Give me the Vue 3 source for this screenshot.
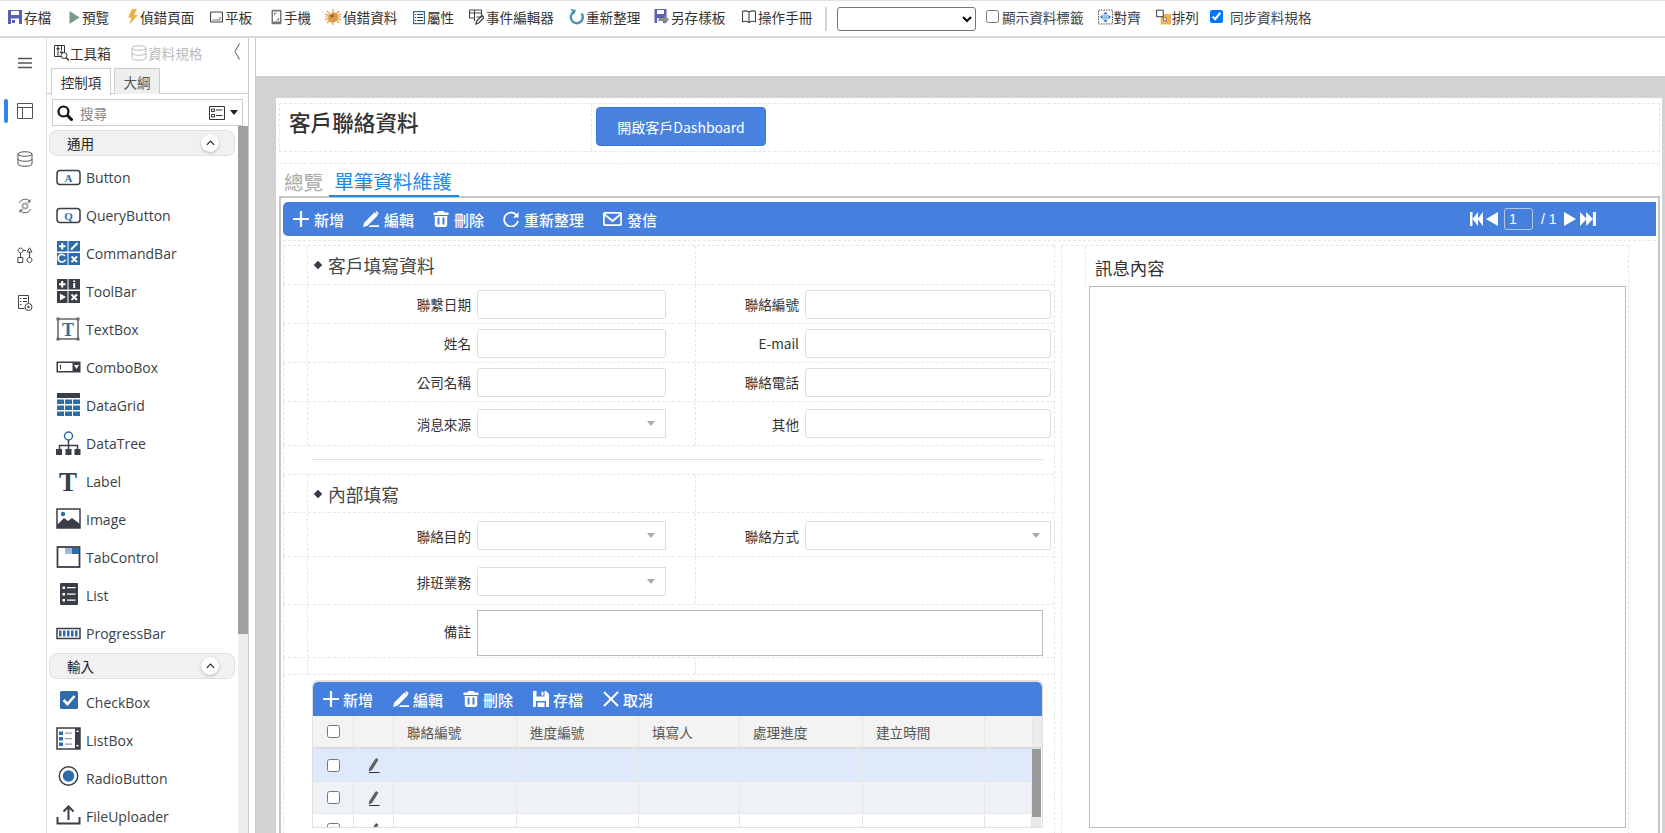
<script setup>
const toolItems = [
    { label: '存檔', icon: 'save', w: 61, iw: 14 },
    { label: '預覽', icon: 'play', w: 57, iw: 11 },
    { label: '偵錯頁面', icon: 'bolt', w: 84, iw: 12 },
    { label: '平板', icon: 'tablet', w: 61, iw: 13 },
    { label: '手機', icon: 'phone', w: 54, iw: 11 },
    { label: '偵錯資料', icon: 'bug', w: 88, iw: 16 },
    { label: '屬性', icon: 'props', w: 56, iw: 12 },
    { label: '事件編輯器', icon: 'event', w: 100, iw: 15 },
    { label: '重新整理', icon: 'refresh', w: 85, iw: 15 },
    { label: '另存樣板', icon: 'saveas', w: 88, iw: 15 },
    { label: '操作手冊', icon: 'book', w: 83, iw: 14 },
];

const icons = {
    save: '<path fill="#5a5eb5" d="M1 1h14v14H1z"/><path fill="#fff" d="M4 2h8v4H4zM4 9.500h8V15H4z"/><path fill="#5a5eb5" d="M5 11h3v3H5z"/>',
    play: '<path fill="#7d9a85" d="M3 2l10 6.500L3 15z"/>',
    bolt: '<path fill="#f0b040" d="M8 0h5l-3 6h4L5 16l2.500-7.500H4z"/>',
    tablet: '<rect x="2" y="3" width="12" height="10" rx="1" fill="none" stroke="#444" stroke-width="1.200"/><path fill="none" stroke="#777" d="M4 11h7.500V8"/>',
    phone: '<rect x="3" y=".8" width="10" height="14.400" rx="1" fill="#777"/><rect x="4.500" y="2.500" width="7" height="10" fill="#fff"/><path fill="none" stroke="#777" d="M6 6V4h2M10 9v2H8"/>',
    bug: '<path stroke="#e8a040" stroke-width="1.200" d="M8 0v16M0 8h16M2 2l12 12M14 2L2 14M0 5l16 6M16 5L0 11"/><ellipse cx="8.500" cy="8.500" rx="4.600" ry="5.400" fill="#d99a4a" transform="rotate(40 8 8)"/><ellipse cx="7" cy="7" rx="1.500" ry="1.200" fill="#8a5a20"/>',
    props: '<rect x="2.600" y="2.600" width="10.800" height="12" fill="none" stroke="#2d6ca8" stroke-width="1.200"/><path stroke="#333" d="M4 5.500h1.200M4 8.500h1.200M4 11.500h1.200M6.200 5.500h5.800M6.200 8.500h5.800M6.200 11.500h5.800"/>',
    event: '<path fill="none" stroke="#444" stroke-width="1.100" d="M1 1h12v7H8M1 1v8h5M1 4h12M6 1v11"/><path fill="none" stroke="#444" stroke-width="1.300" d="M7.500 15l.7-3L13.500 6.500l2 2-5.300 5.500z"/>',
    refresh: '<path fill="none" stroke="#4b93b3" stroke-width="2.400" d="M5 3.200a6 6 0 1 0 8 1.300"/><path fill="#4b93b3" d="M2 0l5.500 1-2 5z"/>',
    saveas: '<path fill="#5a5eb5" d="M1 0h12v14H1z"/><path fill="#fff" d="M3.500 1h7v4h-7zM3.500 9h6v5h-6z"/><path fill="#8a8f8a" d="M5 9h6V6l4.500 4.500L11 15v-3H5z"/>',
    book: '<path fill="none" stroke="#444" stroke-width="1.100" d="M8 3C6 1.800 3 1.800 1.500 2.300v10.400c1.500-.5 4.500-.5 6.500.8 2-1.300 5-1.300 6.500-.8V2.300C13 1.800 10 1.800 8 3zM8 3v11"/>',
    align: '<rect x=".6" y=".6" width="14.800" height="14.800" fill="none" stroke="#333" stroke-dasharray="1.500 1.200"/><path fill="#3f7fc4" d="M8 2l2.500 3h-5zM8 14l-2.500-3h5zM2 8l3-2.500v5zM14 8l-3 2.500v-5z"/><path fill="#9cc0e6" d="M5.500 5.500h5v5h-5z"/>',
    arrange: '<path fill="#eeb25c" d="M5 5h11v11H5z"/><rect x=".7" y=".7" width="7" height="7" fill="#fff" stroke="#333"/><path fill="#fff" stroke="#555" stroke-width=".7" d="M8 9h3v3H8z"/>',
};

const controlGroups = [
    {
        title: '通用',
        items: ['Button', 'QueryButton', 'CommandBar', 'ToolBar', 'TextBox', 'ComboBox', 'DataGrid', 'DataTree', 'Label', 'Image', 'TabControl', 'List', 'ProgressBar'],
    },
    {
        title: '輸入',
        items: ['CheckBox', 'ListBox', 'RadioButton', 'FileUploader'],
    },
];

const B = '#2d6ca8';
const D = '#3a3f47';
const ctlIcons = {
    Button: `<rect x="1" y="5.500" width="23" height="14" rx="3" fill="none" stroke="${D}" stroke-width="1.500"/><text x="12.500" y="16.500" font-size="11" font-weight="700" font-family="Liberation Serif" text-anchor="middle" fill="${B}">A</text>`,
    QueryButton: `<rect x="1" y="5.500" width="23" height="14" rx="3" fill="none" stroke="${D}" stroke-width="1.500"/><text x="12.500" y="16.500" font-size="11" font-weight="700" font-family="Liberation Serif" text-anchor="middle" fill="${B}">Q</text>`,
    CommandBar: `<path fill="${B}" d="M1 0h10.500v10.500H1zM12.500 0H24v10.500H12.500zM1 12h10.500v12H1zM12.500 12H24v12H12.500z"/><path stroke="#fff" stroke-width="2" d="M3 5.200h6.500M6.200 2v6.500M15 8.500l6.500-6.500M15.500 15.500l5.500 5.500M21 15.500L15.500 21"/><path fill="none" stroke="#fff" stroke-width="1.600" d="M9 15a3.800 3.800 0 1 0 .5 3.500"/>`,
    ToolBar: `<path fill="${D}" d="M1 0h10.500v10.500H1zM12.500 0H24v10.500H12.500zM1 12h10.500v12H1zM12.500 12H24v12H12.500z"/><path stroke="#fff" stroke-width="2" d="M3 5.200h6.500M6.200 2v6.500M18.200 4v5M15.500 15.500l5.500 5.500M21 15.500L15.500 21"/><path fill="#fff" d="M17.200 1.500h2v1.500h-2zM4 14.500l6 3.500-6 3.500z"/>`,
    TextBox: `<rect x="2" y="2" width="20" height="20" fill="none" stroke="${D}" stroke-width="1.200"/><path fill="#666" d="M.5.500h3v3h-3zM20.500.500h3v3h-3zM.5 20.500h3v3h-3zM20.500 20.500h3v3h-3z"/><text x="12" y="18.500" font-size="18" font-weight="700" font-family="Liberation Serif" text-anchor="middle" fill="${B}">T</text>`,
    ComboBox: `<rect x="0.500" y="6.500" width="24" height="11" fill="${D}"/><rect x="2" y="8" width="14.500" height="8" fill="#fff"/><path stroke="${D}" d="M4.500 9.500v5"/><path fill="#fff" d="M18 10h5l-2.500 4z"/>`,
    DataGrid: `<path fill="${D}" d="M1 0h23v5H1z"/><path fill="${B}" d="M1 6.500h7v4.500H1zM9 6.500h7v4.500H9zM17 6.500h7v4.500h-7zM1 12.500h7V17H1zM9 12.500h7V17H9zM17 12.500h7V17h-7zM1 18.500h7V23H1zM9 18.500h7V23H9zM17 18.500h7V23h-7z"/>`,
    DataTree: `<circle cx="12.500" cy="5" r="4" fill="none" stroke="${B}" stroke-width="1.500"/><path fill="none" stroke="${D}" stroke-width="1.500" d="M12.500 9v9M3.500 18v-3.500h18V18"/><path fill="${D}" d="M0 18h6v6H0zM9.500 18h6v6h-6zM18.500 18h6v6h-6z"/>`,
    Label: `<text x="12" y="22" font-size="27" font-weight="700" font-family="Liberation Serif" text-anchor="middle" fill="${D}">T</text>`,
    Image: `<rect x="1" y="2" width="23" height="19" fill="#fff" stroke="${D}" stroke-width="1.500"/><path fill="${D}" d="M1 18l7-7 4 3 4-3 8 6v4H1z"/><circle cx="7" cy="7" r="2.200" fill="${B}"/>`,
    TabControl: `<rect x="1.500" y="2" width="22" height="20" fill="#fff" stroke="${D}" stroke-width="1.800"/><path fill="${B}" d="M9 3h14v6H9z"/><path fill="#9cb8da" d="M9 3h7v6H9z"/>`,
    List: `<rect x="4" y="0" width="18" height="22" rx="1" fill="${D}"/><path fill="#fff" d="M6.500 3.500h2.500V6H6.500zM6.500 10h2.500v2.500H6.500zM6.500 16h2.500v2.500H6.500zM11 4h8.500v1.200H11zM11 10.500h8.500v1.200H11zM11 16.500h8.500v1.200H11z"/>`,
    ProgressBar: `<rect x="1" y="7.500" width="23" height="10" fill="none" stroke="${D}" stroke-width="1.500"/><path fill="${B}" d="M3 9.500h2.500v6H3zM7 9.500h2.500v6H7zM11 9.500h2.500v6H11zM15 9.500h2.500v6H15zM19 9.500h2.500v6H19z"/>`,
    CheckBox: `<rect x="4" y="1" width="18" height="18" rx="1.500" fill="${B}"/><path fill="none" stroke="#fff" stroke-width="2.600" d="M7.500 10l4 4 7-8"/>`,
    ListBox: `<rect x="1" y="0" width="23" height="21" fill="#fff" stroke="${D}" stroke-width="1.500"/><path fill="${D}" d="M19 0h5v21h-5z"/><path fill="#fff" d="M21.500 2l1.500 2h-3zM21.500 19l-1.500-2h3z"/><path fill="${B}" d="M3 3.500h4v3.500H3zM3 9h4v3.500H3zM3 14.500h4V18H3z"/><path fill="#999" d="M9 4.500h7v1.200H9zM9 10h7v1.200H9zM9 15.500h7v1.200H9z"/>`,
    RadioButton: `<circle cx="12.500" cy="10" r="9.200" fill="none" stroke="${D}" stroke-width="1.500"/><circle cx="12.500" cy="10" r="5.800" fill="${B}"/>`,
    FileUploader: `<path fill="none" stroke="${D}" stroke-width="2" d="M1.500 13v6.500h22V13M12.500 16V2.500M7.500 7.500l5-5 5 5"/>`,
};

const firstRows = [
    ['聯繫日期', '聯絡編號', 'text', 'text'],
    ['姓名', 'E-mail', 'text', 'text'],
    ['公司名稱', '聯絡電話', 'text', 'text'],
];

const gridButtons = [
    { label: '新增', icon: 'plus' },
    { label: '編輯', icon: 'pen' },
    { label: '刪除', icon: 'trash' },
    { label: '存檔', icon: 'disk' },
    { label: '取消', icon: 'close' },
];

const mainButtons = [
    { label: '新增', icon: 'plus' },
    { label: '編輯', icon: 'pen' },
    { label: '刪除', icon: 'trash' },
    { label: '重新整理', icon: 'redo' },
    { label: '發信', icon: 'mail' },
];

const barIcons = {
    plus: '<path stroke="#fff" stroke-width="2.200" d="M8 0v16M0 8h16"/>',
    pen: '<path fill="#fff" d="M0 16l1.300-4.500L11.500 1.300 14.700 4.500 4.500 14.700zM12.500.3l1-.3 2 2-.3 1.200-1.200 1zM7 14.200h9V16H6z"/>',
    trash: '<path fill="#fff" d="M5 0h6v1.500h4.500v2.500H.5V1.500H5zM1.800 5h12.400v8.500a2.500 2.500 0 0 1-2.500 2.500H4.300a2.500 2.500 0 0 1-2.500-2.500z"/><path fill="#4680de" d="M4.500 6.500h2v7h-2zM9.500 6.500h2v7h-2z"/>',
    redo: '<path fill="none" stroke="#fff" stroke-width="1.800" d="M13.500 4A7 7 0 1 0 15 10"/><path fill="#fff" d="M15.500 1v5.500H10z"/>',
    mail: '<rect x=".9" y="1.900" width="17.200" height="12.200" rx="1" fill="none" stroke="#fff" stroke-width="1.800"/><path fill="none" stroke="#fff" stroke-width="1.800" d="M1 3l8.500 7L18 3"/>',
    disk: '<path fill="#fff" d="M0 0h13l3 3v13H0z"/><path fill="#4680de" d="M3.500 0h8v5.500h-8zM3 10h10v6H3z"/><path fill="#fff" d="M8.500.8h2v3.800h-2zM4.500 11.500h7v4.500h-7z"/>',
    close: '<path stroke="#fff" stroke-width="2" d="M1 1l14 14M15 1L1 15"/>',
};

const gridColumns = ['聯絡編號', '進度編號', '填寫人', '處理進度', '建立時間', ''];
const gridRows = ['selected', 'alt', 'plain'];
</script>

<template>
    <div class="app">
        <header class="topbar">
            <div v-for="item in toolItems" :key="item.label" class="top-item" :style="{ width: item.w + 'px' }">
                <svg class="top-icon" :style="{ width: item.iw + 'px' }" viewBox="0 0 16 16" preserveAspectRatio="xMidYMid slice" v-html="icons[item.icon]"></svg>
                <span>{{ item.label }}</span>
            </div>
            <span class="top-sep"></span>
            <select class="top-select"><option></option></select>
            <label class="top-check"><input type="checkbox"><span>顯示資料標籤</span></label>
            <div class="top-item align-item">
                <svg class="top-icon" viewBox="0 0 16 16" v-html="icons.align"></svg>
                <span>對齊</span>
            </div>
            <div class="top-item arrange-item">
                <svg class="top-icon" viewBox="0 0 16 16" v-html="icons.arrange"></svg>
                <span>排列</span>
            </div>
            <label class="top-check sync-check"><input type="checkbox" checked><span>同步資料規格</span></label>
        </header>

        <div class="workspace">
            <nav class="rail">
                <svg class="rail-icon burger" viewBox="0 0 16 12"><path stroke="#555" stroke-width="1.600" d="M1 1.500h14M1 6h14M1 10.500h14"/></svg>
                <div class="rail-active">
                    <svg class="rail-icon" viewBox="0 0 16 16"><path fill="none" stroke="#555" d="M.5.500h15v15H.5zM.5 4.500h15M5.500 4.500v11"/></svg>
                </div>
                <svg class="rail-icon rail-db" viewBox="0 0 16 16"><path fill="none" stroke="#555" d="M1 3c0-3 14-3 14 0v10c0 3-14 3-14 0zM1 3c0 3 14 3 14 0M1 8c0 3 14 3 14 0"/></svg>
                <svg class="rail-icon" viewBox="0 0 16 16"><path fill="none" stroke="#666" d="M2 5a7 7 0 0 1 11-2M14 11a7 7 0 0 1-11 2"/><path fill="#666" d="M13.500 1v3.500H10zM2.500 15v-3.500H6z"/><circle cx="8" cy="8" r="3.500" fill="#aaa"/><circle cx="8" cy="8" r="1.500" fill="#fff"/></svg>
                <svg class="rail-icon rail-flow" viewBox="0 0 16 16"><path fill="none" stroke="#444" d="M3.500 1a2.500 2.500 0 1 0 .01 0zM6 3.500h3M.8 10.500h5v5h-5zM12.500 10.500a2.500 2.500 0 1 0 .01 0zM12.500 5v5.500M3.500 6v4.500"/><path fill="none" stroke="#444" d="M12.500.8L15 5h-5z"/></svg>
                <svg class="rail-icon rail-report" viewBox="0 0 16 16"><path fill="none" stroke="#444" d="M1.500.5h10v9M1.500.5v13h6"/><path stroke="#444" d="M3 3.500h1.500M6 3.500h4M3 6.500h1.500M6 6.500h4M3 9.500h1.500"/><circle cx="11.500" cy="12" r="3.500" fill="#fff" stroke="#444"/><circle cx="11.500" cy="12" r="1.200" fill="#444"/></svg>
            </nav>

            <aside class="panel">
                <div class="panel-head">
                    <svg class="head-icon" viewBox="0 0 16 16"><path fill="none" stroke="#333" d="M.5.500h10v11H.5zM4 .5v11M7.500.5v5"/><path fill="#333" d="M2.500 3h3v1.500h-3zM6 6.500h3V8H6z"/><circle cx="10" cy="10.500" r="3" fill="#fff" stroke="#333"/><path stroke="#333" stroke-width="1.500" d="M12 12.500l3 3"/></svg>
                    <span class="head-tool">工具箱</span>
                    <svg class="head-icon dim" viewBox="0 0 16 16"><path fill="none" stroke="#bbb" d="M1 3c0-3 14-3 14 0v10c0 3-14 3-14 0zM1 3c0 3 14 3 14 0M1 8c0 3 14 3 14 0"/></svg>
                    <span class="head-spec">資料規格</span>
                    <svg class="head-collapse" viewBox="0 0 7 17"><path fill="none" stroke="#555" d="M5.500.5L1 8.500l4.500 8"/></svg>
                </div>
                <div class="panel-tabs">
                    <span class="panel-tab active">控制項</span>
                    <span class="panel-tab">大綱</span>
                </div>
                <div class="search">
                    <svg class="search-glass" viewBox="0 0 16 16"><circle cx="6.500" cy="6.500" r="5" fill="none" stroke="#111" stroke-width="2.200"/><path stroke="#111" stroke-width="3" d="M10.500 10.500l5 5"/></svg>
                    <span class="search-text">搜尋</span>
                    <svg class="search-list" viewBox="0 0 16 16"><path fill="none" stroke="#333" d="M.5 1.500h15v13H.5z"/><path fill="none" stroke="#333" d="M2.500 4h3v2.500h-3zM2.500 9.500h3V12h-3z"/><path stroke="#333" d="M7 5h6.500M7 10.500h6.500"/></svg>
                    <span class="search-caret"></span>
                </div>
                <div class="ctl-wrap">
                    <div class="ctl-list">
                        <template v-for="group in controlGroups" :key="group.title">
                            <div class="group-head">
                                <span>{{ group.title }}</span>
                                <span class="group-toggle">
                                    <svg viewBox="0 0 10 6"><path fill="none" stroke="#222" stroke-width="1.300" d="M1 5l4-4 4 4"/></svg>
                                </span>
                            </div>
                            <div v-for="name in group.items" :key="name" class="ctl-item">
                                <svg class="ctl-icon" viewBox="0 -4 25 32" v-html="ctlIcons[name]"></svg>
                                <span>{{ name }}</span>
                            </div>
                        </template>
                    </div>
                    <div class="ctl-scroll"><div class="ctl-thumb"></div></div>
                </div>
            </aside>

            <main class="main">
                <div class="main-strip"></div>
                <div class="canvas">
                    <div class="page">
                        <div class="page-head">
                            <div class="page-title">客戶聯絡資料</div>
                            <div class="page-action"><button type="button" class="dash-btn">開啟客戶Dashboard</button></div>
                        </div>
                        <div class="tabs">
                            <span class="tab">總覽</span>
                            <span class="tab active">單筆資料維護</span>
                        </div>

                        <section class="tab-box">
                            <div class="bar main-bar">
                                <div v-for="btn in mainButtons" :key="btn.label" class="bar-btn">
                                    <svg :viewBox="btn.icon === 'mail' ? '0 0 19 16' : '0 0 16 16'" :class="btn.icon === 'mail' ? 'bar-mail' : 'bar-icon'" v-html="barIcons[btn.icon]"></svg>
                                    <span>{{ btn.label }}</span>
                                </div>
                                <div class="pager">
                                    <svg class="pg-icon" viewBox="0 0 13 12" preserveAspectRatio="none"><path fill="#fff" d="M0 0h2.500v12H0zM8 0v12L2.500 6zM13 0v12L7.500 6z"/></svg>
                                    <svg class="pg-arrow" viewBox="0 0 12 12" preserveAspectRatio="none"><path fill="#fff" d="M12 0v12L0 6z"/></svg>
                                    <span class="pg-input">1</span>
                                    <span class="pg-total">/ 1</span>
                                    <svg class="pg-arrow" viewBox="0 0 12 12" preserveAspectRatio="none"><path fill="#fff" d="M0 0v12l12-6z"/></svg>
                                    <svg class="pg-icon pg-last" viewBox="0 0 13 12" preserveAspectRatio="none"><path fill="#fff" d="M13 0h-2.500v12H13zM5 0v12l5.500-6zM0 0v12l5.500-6z"/></svg>
                                </div>
                            </div>

                            <div class="tab-body">
                                <div class="form">
                                    <div class="frow title-row">
                                        <i class="gut"></i>
                                        <div class="sec-title"><span class="diamond"></span>客戶填寫資料</div>
                                        <i class="gut"></i>
                                        <div class="fcell"></div>
                                    </div>
                                    <div v-for="row in firstRows" :key="row[0]" class="frow field-row">
                                        <i class="gut"></i>
                                        <div class="fcell left"><label>{{ row[0] }}</label><input class="inp" type="text"></div>
                                        <i class="gut"></i>
                                        <div class="fcell right"><label>{{ row[1] }}</label><input class="inp" type="text"></div>
                                    </div>
                                    <div class="frow field-row tall-a">
                                        <i class="gut"></i>
                                        <div class="fcell left"><label>消息來源</label><div class="inp combo"></div></div>
                                        <i class="gut"></i>
                                        <div class="fcell right"><label>其他</label><input class="inp" type="text"></div>
                                    </div>
                                    <div class="rule-row"><hr></div>
                                    <div class="frow title-row second">
                                        <i class="gut"></i>
                                        <div class="sec-title"><span class="diamond"></span>內部填寫</div>
                                        <i class="gut"></i>
                                        <div class="fcell"></div>
                                    </div>
                                    <div class="frow field-row tall-b">
                                        <i class="gut"></i>
                                        <div class="fcell left"><label>聯絡目的</label><div class="inp combo"></div></div>
                                        <i class="gut"></i>
                                        <div class="fcell right"><label>聯絡方式</label><div class="inp combo"></div></div>
                                    </div>
                                    <div class="frow field-row tall-c">
                                        <i class="gut"></i>
                                        <div class="fcell left"><label>排班業務</label><div class="inp combo"></div></div>
                                        <i class="gut"></i>
                                        <div class="fcell right"></div>
                                    </div>
                                    <div class="note-row">
                                        <i class="gut"></i>
                                        <label>備註</label>
                                        <textarea class="note"></textarea>
                                    </div>
                                    <div class="frow spacer-row">
                                        <i class="gut"></i><div class="fcell"></div><i class="gut"></i><div class="fcell"></div>
                                    </div>

                                    <div class="grid-holder">
                                        <div class="dgrid">
                                            <div class="bar grid-bar">
                                                <div v-for="btn in gridButtons" :key="btn.label" class="bar-btn">
                                                    <svg class="bar-icon" viewBox="0 0 16 16" v-html="barIcons[btn.icon]"></svg>
                                                    <span>{{ btn.label }}</span>
                                                </div>
                                            </div>
                                            <div class="grow ghead">
                                                <div class="gcell"><input type="checkbox"></div>
                                                <div class="gcell"></div>
                                                <div v-for="(col, i) in gridColumns" :key="i" class="gcell gtext">{{ col }}</div>
                                                <div class="gcell last"></div>
                                            </div>
                                            <div class="gbody">
                                                <div class="grows">
                                                    <div v-for="row in gridRows" :key="row" class="grow" :class="row">
                                                        <div class="gcell"><input type="checkbox"></div>
                                                        <div class="gcell">
                                                            <svg class="row-pen" viewBox="0 0 12 16"><path fill="#666" stroke="#333" stroke-width=".6" d="M1.500 11.500L8 1.500l2 1.300-6.300 10-2.500 1.200z"/><path stroke="#333" d="M1 15.500h10.500"/></svg>
                                                        </div>
                                                        <div v-for="(col, i) in gridColumns" :key="i" class="gcell"></div>
                                                    </div>
                                                </div>
                                                <div class="grid-scroll"><div class="grid-thumb"></div></div>
                                            </div>
                                        </div>
                                    </div>
                                </div>

                                <div class="msg">
                                    <div class="msg-inner">
                                        <div class="msg-title">訊息內容</div>
                                        <div class="msg-box"></div>
                                    </div>
                                </div>
                            </div>
                        </section>
                    </div>
                </div>
            </main>
        </div>
    </div>
</template>

<style scoped>
.app{width:1665px;height:833px;overflow:hidden;display:flex;flex-direction:column;background:#fff;color:#333;font-family:"Noto Sans CJK TC","Liberation Sans",sans-serif;font-size:13.6px}

.topbar{flex:0 0 38px;box-sizing:border-box;display:flex;align-items:center;padding:0 0 4px 8px;border-top:1px solid #e2e2e2;border-bottom:2px solid #d8d8d8;color:#333}
.top-item{display:flex;align-items:center;gap:2px;flex:none;white-space:nowrap}
.top-icon{width:15px;height:16px;flex:none}
.top-sep{width:2px;height:24px;background:#d5d5d5;margin:4px 10px 0 0}
.top-select{width:139px;height:24px;margin-top:4px;border:1px solid #767676;border-radius:3px;background:#fff;font-size:13px}
.top-check{display:flex;align-items:center;gap:3px;margin-left:10px;white-space:nowrap;color:#444}
.top-check input{width:13px;height:13px;margin:0}
.align-item{margin-left:14px;gap:1px}
.arrange-item{margin-left:15px;gap:1px}
.sync-check{margin-left:11px;gap:7px}

.workspace{flex:1;display:flex;min-height:0}
.rail{flex:0 0 47px;box-sizing:border-box;display:flex;flex-direction:column;align-items:center;border-right:1px solid #ddd;padding:17px 0 0 3px}
.rail-icon{width:16px;height:16px;display:block;margin-top:31px;flex:none}
.burger{height:12px;margin-top:2px}
.rail-active{position:relative;margin-top:34px}
.rail-active .rail-icon{margin:0}
.rail-active::before{content:"";position:absolute;left:-13px;top:-4px;width:4px;height:24px;border-radius:2px;background:#2f86eb}
.rail-db{margin-top:32px}
.rail-flow{margin-top:33px}
.rail-report{margin-top:32px}

.panel{flex:0 0 202px;box-sizing:border-box;border-right:1px solid #ccc;display:flex;flex-direction:column;min-height:0}
.panel-head{height:30px;display:flex;align-items:center;padding-left:7px}
.head-icon{width:16px;height:16px;flex:none}
.head-tool{width:61px;color:#333}
.head-spec{color:#bbb;margin-left:1px;width:86px}
.head-collapse{width:7px;height:17px;margin-top:-4px}
.panel-tabs{height:26px;display:flex;gap:3px;padding-left:4px;box-sizing:border-box;border-bottom:1px solid #ccc}
.panel-tab{box-sizing:border-box;height:26px;width:46px;display:flex;align-items:center;justify-content:center;border:1px solid #ccc;border-bottom:0;background:#eee;color:#555;font-size:13.5px}
.panel-tab.active{width:60px;height:27px;background:#fff;color:#333}
.search{margin:5px 0 0 5px;box-sizing:border-box;width:191px;height:27px;border:1px solid #ccc;display:flex;align-items:center;padding:0 4px;flex:none}
.search-glass{width:16px;height:16px;flex:none}
.search-text{margin-left:7px;color:#888;flex:1}
.search-list{width:16px;height:16px;flex:none}
.search-caret{width:0;height:0;border:4px solid transparent;border-top:5px solid #222;border-bottom:0;margin-left:5px}
.ctl-wrap{flex:1;display:flex;min-height:0;overflow:hidden}
.ctl-list{flex:1;padding:4px 2px 0 2px;min-width:0}
.ctl-scroll{flex:0 0 10px;background:#eee}
.ctl-thumb{height:508px;background:#a0a0a0}
.group-head{box-sizing:border-box;width:186px;height:26px;display:flex;align-items:center;justify-content:space-between;padding:0 15px 0 17px;border:1px solid #e0e0e0;border-radius:8px;background:#f1f1f1;color:#222;font-size:13.6px}
.group-head:not(:first-child){margin-top:1px}
.group-toggle{width:18px;height:18px;border-radius:50%;background:#fff;box-shadow:0 1px 3px rgba(0,0,0,.25);display:flex;align-items:center;justify-content:center}
.group-toggle svg{width:9px;height:6px}
.ctl-item{height:38px;display:flex;align-items:center;gap:5px;padding-left:7px;font-family:"Open Sans",sans-serif;font-size:14px;color:#3a3f47}
.group-head + .ctl-item{margin-top:2px}
.group-head:not(:first-child) + .ctl-item{margin-top:4px}
.ctl-icon{width:25px;height:32px;flex:none}

.main{flex:1;min-width:0;display:flex;flex-direction:column;margin-left:6px;border-left:1px solid #ccc}
.main-strip{flex:0 0 38px;background:#fff}
.canvas{flex:1;min-height:0;background:#d2d2d2;padding:21px 3px 0 20px;overflow:hidden;border-top:1px solid #ccc}
.page{background:#fff;height:100%;padding:5px 2px 0 3px;box-sizing:border-box;overflow:hidden}
.page-head{height:49px;box-sizing:border-box;display:flex;border:1px dashed #e6e6e6}
.page-title{width:312px;box-sizing:border-box;padding:2px 0 0 9px;font-size:21.6px;font-weight:500;color:#333;line-height:32px;border-right:1px dashed #e6e6e6}
.page-action{padding-top:3px;padding-left:4px}
.dash-btn{width:170px;height:39px;border:1px solid #3f78d0;border-radius:4px;background:#4a82e0;color:#fff;font-family:inherit;font-size:14px;padding:0}
.tabs{height:33px;margin-top:11px;padding-left:5px;border-top:1px dashed #e6e6e6;box-sizing:border-box;display:flex;align-items:flex-end;gap:6px}
.tab{font-size:19.6px;line-height:29px;color:#aaa}
.tab.active{color:#1e88e5;padding:0 7px 0 5px;border-bottom:2px solid #1e88e5;margin-bottom:-1px}

.tab-box{width:1381px;box-sizing:border-box;border:2px solid #c6c6c6;border-bottom:0;padding:4px 2px 0 2px;height:640px}
.bar{display:flex;align-items:center;background:#4680de;color:#fff;font-weight:500}
.main-bar{height:34px;border-radius:5px 0 0 5px;width:1373px;padding-left:10px;box-sizing:border-box;font-size:15px}
.main-bar .bar-btn{gap:5px;margin-right:19px}
.bar-btn{display:flex;align-items:center;gap:4px;margin-right:20px;white-space:nowrap}
.bar-icon{width:16px;height:16px;flex:none}
.bar-mail{width:19px;height:16px;flex:none}
.pager{margin-left:auto;margin-right:60px;display:flex;align-items:center}
.pg-icon{width:13px;height:14px;margin-right:3px}
.pg-arrow{width:12px;height:14px}
.pg-input{box-sizing:border-box;width:29px;height:22px;border:1px solid #b5c8e8;border-radius:3px;margin:0 8px 0 6px;padding-left:4px;font:14px/20px "Liberation Sans",sans-serif}
.pg-total{font:14px "Liberation Sans",sans-serif;width:23px}
.pg-last{margin:0 0 0 4px;width:16px}

.tab-body{display:flex;border-top:1px dashed #e6e6e6;margin-top:4px}
.form{flex:0 0 772px;box-sizing:border-box;margin-top:4px;border-right:1px dashed #e6e6e6}
.frow{display:grid;grid-template-columns:25px 361px 27px 358px;border-bottom:1px dashed #e6e6e6;box-sizing:border-box}
.gut{border-right:1px dashed #e6e6e6;border-left:1px dashed #e6e6e6;display:block}
.gut:nth-child(3){border-left:0}
.frow:first-child{border-top:1px dashed #e6e6e6}
.title-row{height:40px}
.title-row.second{height:38px}
.field-row{height:39px}
.tall-a{height:44px}
.tall-b{height:44px}
.tall-c{height:48px}
.tall-b .fcell,.tall-c .fcell{padding-top:2px}
.spacer-row{height:17px}
.sec-title{display:flex;align-items:center;padding-left:5px;font-size:17.8px;color:#444}
.diamond{width:6px;height:6px;background:#3a3a4a;transform:rotate(45deg);margin-right:7px;margin-left:2px}
.fcell{display:flex;align-items:center;min-width:0}
.fcell label,.note-row label{text-align:right;font-size:13.6px;color:#333;white-space:nowrap;flex:none}
.fcell.left label{width:163px;margin-right:6px}
.fcell.right label{width:103px;margin-right:6px}
.inp{box-sizing:border-box;height:29px;width:189px;border:1px solid #ddd;border-radius:3px;background:#fff;padding:0;outline:none;flex:none}
.fcell.right .inp{width:246px}
.combo{position:relative;border-radius:3px 0 0 3px}
.combo::after{content:"";position:absolute;right:10px;top:11px;border:4.5px solid transparent;border-top:5px solid #aaa;border-bottom:0}
.rule-row{height:29px;box-sizing:border-box;border-bottom:1px dashed #e6e6e6;padding:13px 11px 0 28px;border-left:1px dashed #e6e6e6}
.rule-row hr{margin:0;border:0;border-top:1px solid #e0e0e0}
.note-row{height:53px;box-sizing:border-box;display:flex;align-items:center;border-bottom:1px dashed #e6e6e6}
.note-row .gut{width:25px;height:100%;box-sizing:border-box;flex:none}
.note-row label{width:163px;margin-right:6px}
.note{box-sizing:border-box;width:566px;height:46px;border:1px solid #bbb;resize:none;outline:none;background:#fff;margin-top:3px;flex:none}

.grid-holder{border-left:1px dashed #e6e6e6;padding:5px 0 0 28px;height:170px;box-sizing:border-box}
.dgrid{width:731px;height:148px;box-sizing:border-box;overflow:hidden;border:1px solid #e0e0e0;border-top:2px solid #e0e0e0;border-radius:6px 6px 0 0;background:#fff}
.grid-bar{height:34px;padding-left:10px;font-size:15px;border-radius:5px 5px 0 0}
.grow{display:grid;grid-template-columns:41px 40px 123px 122px 101px 123px 122px 48px 10px;height:32px}
.gcell{display:flex;align-items:center;justify-content:center;border-right:1px solid #e6e6e6;box-sizing:border-box;min-width:0}
.gcell input{width:13px;height:13px;margin:0}
.ghead{background:#f3f3f3;border-bottom:2px solid #ddd;height:33px;box-sizing:border-box}
.gtext{justify-content:flex-start;padding-left:13px;font-size:13.6px;color:#555}
.last{border-right:0;background:#ececec}
.gbody{display:flex;position:relative}
.grows{width:719px;flex:none}
.grows .grow{grid-template-columns:41px 40px 123px 122px 101px 123px 122px 47px;border-bottom:1px solid #e6e6e6;box-sizing:border-box;height:32px}
.grows .grow:first-child{height:33px}
.selected{background:#deeafc}
.alt{background:#eef1f6}
.plain{background:#fff}
.row-pen{width:12px;height:16px}
.grid-scroll{flex:0 0 9px;background:#e8e8e8;height:80px}
.grid-thumb{height:68px;background:#999}

.msg{flex:1;min-width:0;margin-left:3px;padding:4px 0 0 3px}
.msg-inner{box-sizing:border-box;width:568px;height:600px;border:1px dashed #e6e6e6;border-width:1px 1px 0 1px;padding:0 0 0 23px}
.msg-title{font-size:17.4px;color:#333;height:40px;line-height:44px;padding-left:9px;border-left:1px dashed #e6e6e6}
.msg-box{box-sizing:border-box;width:537px;height:542px;border:1px solid #bbb;margin-left:4px}
</style>

<style>
html,body{margin:0;padding:0;background:#fff}
</style>
